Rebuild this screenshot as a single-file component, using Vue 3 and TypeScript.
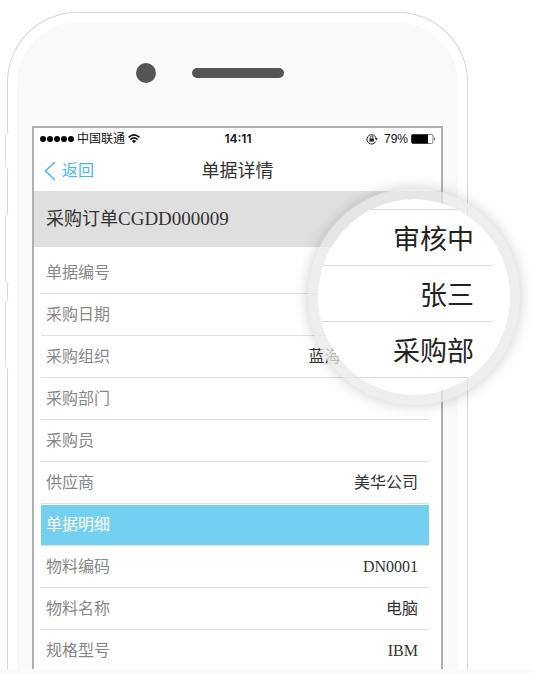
<script setup lang="ts">
interface Detail {
  label: string
  value?: string
  kind?: 'code' | 'section' | 'clipped'
}

const details: Detail[] = [
  { label: '单据编号' },
  { label: '采购日期' },
  { label: '采购组织', value: '蓝海.', kind: 'clipped' },
  { label: '采购部门' },
  { label: '采购员' },
  { label: '供应商', value: '美华公司' },
  { label: '单据明细', kind: 'section' },
  { label: '物料编码', value: 'DN0001', kind: 'code' },
  { label: '物料名称', value: '电脑' },
  { label: '规格型号', value: 'IBM', kind: 'code' },
]

const magnified: string[] = ['审核中', '张三', '采购部']
</script>

<template>
  <main class="page">
    <div class="phone">
      <svg class="side-keys" viewBox="4 130 6 242" aria-hidden="true">
        <g fill="#fff" stroke="#dcdcdc">
          <path d="M8.5 131.500L7.500 132L5.500 134.500V166.500L7.500 169L8.500 169.500" />
          <path d="M8.500 213.500L7.500 214L5.500 216.500V281L7.500 283.500L8.500 284" />
          <path d="M8.500 299L7.500 299.500L5.500 302V366.500L7.500 369L8.500 369.500" />
        </g>
      </svg>
      <div class="face">
        <div class="earpiece">
          <span class="camera"></span>
          <span class="speaker"></span>
        </div>

        <section class="screen">
          <div class="status">
            <div class="carrier">
              <svg class="signal" viewBox="0 0 34 8" aria-hidden="true">
                <circle cx="3" cy="4" r="3" />
                <circle cx="10" cy="4" r="3" />
                <circle cx="17" cy="4" r="3" />
                <circle cx="24" cy="4" r="3" />
                <circle cx="31" cy="4" r="3" />
              </svg>
              <span>中国联通</span>
              <svg class="wifi" viewBox="0 0 12 10" aria-hidden="true">
                <path d="M0.600 3.400Q6 -1.600 11.400 3.400" fill="none" stroke="#111" stroke-width="1.500" />
                <path d="M2.500 5.600Q6 2.200 9.500 5.600" fill="none" stroke="#111" stroke-width="1.500" />
                <path d="M3.900 6.900Q6 5.300 8.100 6.900L6 9.200Z" fill="#111" />
              </svg>
            </div>
            <time class="clock">14:11</time>
            <div class="power">
              <svg class="lock" viewBox="0 0 12 12" aria-hidden="true">
                <path d="M9.800 8.500A4.700 4.700 0 1 1 10.200 5.300" fill="none" stroke="#222" stroke-width="1" />
                <path d="M8.700 5.200H11.800L10.300 7.500Z" fill="#222" />
                <rect x="3.500" y="5.400" width="4.400" height="3.200" fill="#222" />
                <path d="M4.400 5.500V4.400A1.300 1.300 0 0 1 7 4.400V5.500" fill="none" stroke="#222" stroke-width="0.900" />
              </svg>
              <span>79%</span>
              <svg class="battery" viewBox="0 0 25 10" aria-hidden="true">
                <rect x="0.500" y="0.500" width="21.500" height="9" rx="1.500" fill="#fff" stroke="#777" />
                <path d="M1.500 0.500H17V9.500H1.500Q0.500 9.500 0.500 8.500V1.500Q0.500 0.500 1.500 0.500Z" fill="#000" />
                <path d="M23 3.200Q24.800 5 23 6.800Z" fill="#222" />
              </svg>
            </div>
          </div>

          <header class="nav">
            <a class="back" href="#">
              <svg class="chevron" viewBox="0 0 12 20" aria-hidden="true">
                <path d="M11 1L1.500 10L11 19" fill="none" stroke="#45b8f3" stroke-width="1.500" />
              </svg>
              <span>返回</span>
            </a>
            <h1 class="title">单据详情</h1>
          </header>

          <h2 class="order">采购订单<span class="order-no">CGDD000009</span></h2>

          <dl class="details">
            <div v-for="item in details" :key="item.label" class="row" :class="item.kind">
              <dt>{{ item.label }}</dt>
              <dd v-if="item.value">{{ item.value }}</dd>
            </div>
          </dl>

          <aside class="lens">
            <ul class="lens-view">
              <li v-for="text in magnified" :key="text">{{ text }}</li>
            </ul>
          </aside>
        </section>
      </div>
    </div>
    <div class="base"></div>
  </main>
</template>

<style>
body {
  background: #fff;
}
</style>

<style scoped>
.page {
  padding-top: 12px;
  overflow: hidden;
  font-family: "Liberation Sans", "Noto Sans CJK SC", sans-serif;
  color: #333;
}

.phone {
  position: relative;
  margin: 0 66px 0 7px;
  padding: 9px 9px 0;
  border: 1px solid #d6d6d6;
  border-bottom: 0;
  border-radius: 70px 70px 0 0;
}

.side-keys {
  position: absolute;
  left: -4px;
  top: 117px;
  width: 6px;
  height: 242px;
}

.face {
  padding: 0 15px;
  background: #f9f9f9;
  border-radius: 62px 62px 0 0;
}

.earpiece {
  display: flex;
  align-items: center;
  gap: 36px;
  height: 102px;
  padding-left: 104px;
  padding-bottom: 2px;
}

.camera {
  width: 20px;
  height: 20px;
  border-radius: 50%;
  background: #555;
}

.speaker {
  width: 92px;
  height: 10px;
  border-radius: 5px;
  background: #555;
}

.screen {
  position: relative;
  border: 2px solid #b0b0b0;
  border-bottom: 0;
  background: #fff;
}

.status {
  display: grid;
  grid-template-columns: 1fr auto 1fr;
  align-items: center;
  height: 22px;
  padding: 0 5px 0 6px;
  font-family: Inter, "Noto Sans CJK SC", sans-serif;
  font-size: 12px;
  line-height: 22px;
  color: #111;
}

.carrier,
.power {
  display: flex;
  align-items: center;
}

.carrier {
  gap: 3px;
}

.power {
  justify-content: flex-end;
  gap: 3px;
  font-family: "Liberation Sans", sans-serif;
}

.signal {
  width: 34px;
  height: 8px;
}

.wifi {
  width: 12px;
  height: 10px;
}

.clock {
  font-weight: 600;
}

.lock {
  width: 12px;
  height: 12px;
  margin-right: 3px;
}

.battery {
  width: 25px;
  height: 10px;
}

.nav {
  display: grid;
  grid-template-columns: 1fr auto 1fr;
  align-items: center;
  height: 41px;
  padding: 0 10px;
}

.back {
  display: flex;
  align-items: center;
  gap: 6px;
  font-size: 16px;
  line-height: 24px;
  color: #45b8f3;
  text-decoration: none;
}

.chevron {
  width: 12px;
  height: 20px;
}

.title {
  margin: 0;
  font-size: 18px;
  font-weight: 400;
  line-height: 24px;
}

.order {
  margin: 0;
  padding: 0 12px;
  background: #dfdfdf;
  font-size: 18px;
  font-weight: 400;
  line-height: 55px;
}

.order-no {
  font-family: "Liberation Serif", serif;
  font-size: 19px;
}

.details {
  margin: 0;
  padding: 5px 12px 0 7px;
}

.row {
  display: flex;
  justify-content: space-between;
  height: 41px;
  padding: 0 11px 0 5px;
  border-bottom: 1px solid #e0e0e0;
  font-size: 16px;
  line-height: 42px;
}

.row:last-child {
  height: 39px;
  border-bottom: 0;
}

.row dt {
  color: #888;
}

.row dd {
  margin: 0;
}

.row.section {
  height: 40px;
  border-top: 1px solid #fff;
  background: #74d0f1;
  line-height: 40px;
}

.row.section dt {
  color: #fff;
}

.row.code dd {
  font-family: "Liberation Serif", serif;
  font-size: 16px;
}

.row.clipped dd {
  margin-right: 73px;
}

.lens {
  position: absolute;
  top: 60px;
  right: -80px;
  width: 192px;
  height: 196px;
  border: 11px solid rgba(232, 232, 232, 0.75);
  border-radius: 50%;
  background: #fff;
  background-clip: padding-box;
  box-shadow: 0 0 14px rgba(0, 0, 0, 0.18);
}

.lens-view {
  height: 100%;
  box-sizing: border-box;
  margin: 0;
  padding: 10px 17px 0 0;
  border-radius: 50%;
  overflow: hidden;
  list-style: none;
  font-size: 27px;
  line-height: 60px;
  color: #222;
  text-align: right;
}

.lens-view li {
  height: 55px;
  padding-right: 19px;
  border-bottom: 1px solid #dcdcdc;
}

.lens-view li:first-child {
  border-top: 1px solid #dcdcdc;
}

.base {
  height: 5px;
  background: #fafafa;
}
</style>
